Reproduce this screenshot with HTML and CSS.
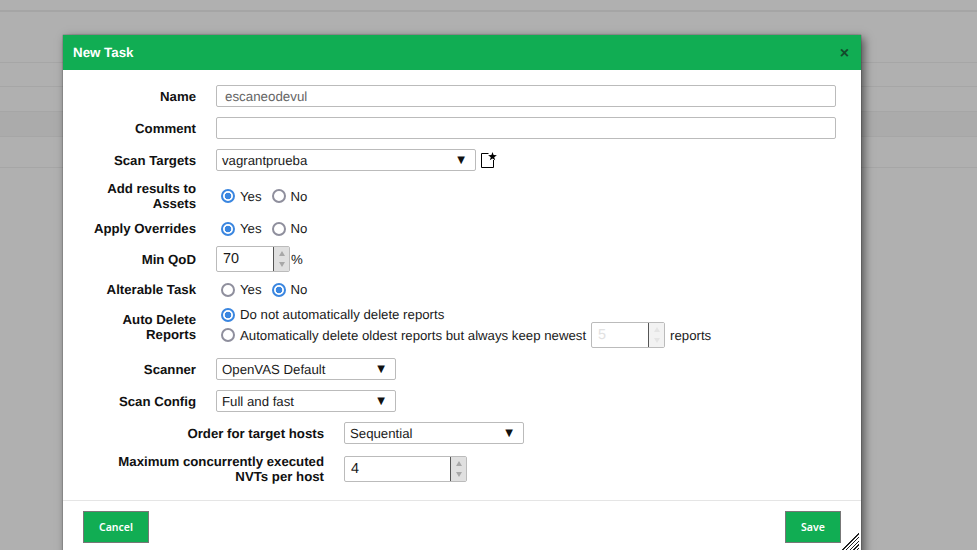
FILE: index.html
```html
<!DOCTYPE html>
<html lang="en">
  <head>
    <title>New Task</title>
    <link rel="stylesheet" href="styles.css">
  </head>
  <body>
    <div class="page">
      <div class="page-head"></div>
      <div class="page-row row-a"></div>
      <div class="page-row row-b"></div>
      <div class="page-row row-c"></div>
      <div class="page-row row-d"></div>
      <div class="page-row row-e"></div>
    </div>

    <div class="dialog">
      <div class="dialog-title">
        <span>New Task</span>
        <span class="close">×</span>
      </div>

      <form class="dialog-body">
        <div class="row">
          <label class="label">Name</label>
          <div class="text-input name-input">escaneodevul</div>
        </div>

        <div class="row">
          <label class="label">Comment</label>
          <div class="text-input"></div>
        </div>

        <div class="row">
          <label class="label">Scan Targets</label>
          <div class="select select-wide"><span>vagrantprueba</span><span class="arrow">▼</span></div>
          <svg class="new-icon" width="18" height="16" viewBox="0 0 18 16">
            <path d="M12.5 8v7.5H.5V1.5h7" fill="none" stroke="#000" stroke-width="1"/>
            <path d="M11.5 0l1.1 3.1 3.3.1-2.7 2 1 3.1-2.7-1.9-2.7 1.9 1-3.1-2.7-2 3.3-.1z" fill="#000"/>
          </svg>
        </div>

        <div class="row">
          <label class="label">Add results to Assets</label>
          <div class="radios">
            <label class="radio"><input type="radio" name="assets" checked>Yes</label>
            <label class="radio"><input type="radio" name="assets">No</label>
          </div>
        </div>

        <div class="row">
          <label class="label">Apply Overrides</label>
          <div class="radios">
            <label class="radio"><input type="radio" name="overrides" checked>Yes</label>
            <label class="radio"><input type="radio" name="overrides">No</label>
          </div>
        </div>

        <div class="row">
          <label class="label">Min QoD</label>
          <div class="spinner">
            <span class="spinner-value">70</span>
            <span class="spinner-btns"><i class="up"></i><i class="down"></i></span>
          </div>
          <span class="unit">%</span>
        </div>

        <div class="row">
          <label class="label">Alterable Task</label>
          <div class="radios">
            <label class="radio"><input type="radio" name="alterable">Yes</label>
            <label class="radio"><input type="radio" name="alterable" checked>No</label>
          </div>
        </div>

        <div class="row row-auto">
          <label class="label">Auto Delete Reports</label>
          <div class="auto-delete">
            <label class="radio"><input type="radio" name="auto" checked>Do not automatically delete reports</label>
            <div class="auto-keep">
              <label class="radio"><input type="radio" name="auto">Automatically delete oldest reports but always keep newest</label>
              <div class="spinner disabled">
                <span class="spinner-value">5</span>
                <span class="spinner-btns"><i class="up"></i><i class="down"></i></span>
              </div>
              <span>reports</span>
            </div>
          </div>
        </div>

        <div class="row">
          <label class="label">Scanner</label>
          <div class="select"><span>OpenVAS Default</span><span class="arrow">▼</span></div>
        </div>

        <div class="row">
          <label class="label">Scan Config</label>
          <div class="select"><span>Full and fast</span><span class="arrow">▼</span></div>
        </div>

        <div class="row">
          <label class="label label-long">Order for target hosts</label>
          <div class="select"><span>Sequential</span><span class="arrow">▼</span></div>
        </div>

        <div class="row">
          <label class="label label-long">Maximum concurrently executed NVTs per host</label>
          <div class="spinner spinner-long">
            <span class="spinner-value">4</span>
            <span class="spinner-btns"><i class="up"></i><i class="down"></i></span>
          </div>
        </div>
      </form>

      <div class="dialog-footer">
        <button type="button" class="btn btn-cancel">Cancel</button>
        <button type="button" class="btn btn-save">Save</button>
      </div>

      <div class="resize-handle"></div>
    </div>
  </body>
</html>
```

FILE: styles.css
```css
html,
body {
  height: 100%;
}

body {
  margin: 0;
  overflow: hidden;
  background-color: #b0b0b0;
  font-family: "Liberation Sans", Arial, sans-serif;
  font-size: 13.22px;
  color: #1a1a1a;
  text-rendering: geometricPrecision;
}

.page-head {
  height: 10px;
  border-bottom: 2px solid #a5a5a5;
}

.page-row {
  border-bottom: 1px solid #a6a6a6;
}

.row-a {
  height: 50px;
}

.row-b {
  height: 23px;
}

.row-c {
  height: 24px;
}

.row-d {
  height: 24px;
  background-color: #ababab;
}

.row-e {
  height: 30px;
}

.dialog {
  position: absolute;
  top: 35px;
  left: 63px;
  width: 798px;
  height: 530px;
  background: white;
  box-shadow: 3px 3px 9px rgba(0, 0, 0, 0.55), 0 0 1px rgba(0, 0, 0, 0.7);
}

.dialog-title {
  display: flex;
  justify-content: space-between;
  align-items: center;
  height: 35px;
  padding: 0 12px 0 10px;
  background-color: #11ad53;
  color: white;
  font-weight: bold;
  font-size: 13.33px;
}

.close {
  color: #134a2b;
  font-size: 16px;
  line-height: 16px;
  margin-top: 2px;
}

.dialog-body {
  display: flex;
  flex-direction: column;
  gap: 10px;
  padding: 15px 25px 16px 20px;
}

.row {
  display: flex;
  align-items: center;
}

.label {
  flex: none;
  width: 113px;
  margin-right: 20px;
  font-weight: bold;
  line-height: 15px;
  text-align: right;
  color: #111;
}

.label-long {
  width: 241px;
}

.text-input {
  flex: 1;
  box-sizing: border-box;
  height: 22px;
  padding: 0 8px;
  border: 1px solid #bbb;
  border-radius: 2px;
  line-height: 22px;
}

.name-input {
  color: #666;
  font-size: 13.33px;
}

.select {
  display: flex;
  justify-content: space-between;
  align-items: center;
  box-sizing: border-box;
  width: 180px;
  height: 22px;
  padding: 0 10px 0 5px;
  border: 1px solid #bbb;
  border-radius: 2px;
}

.select-wide {
  width: 260px;
}

.arrow {
  font-family: "DejaVu Sans", sans-serif;
  font-size: 10px;
  color: #111;
}

.new-icon {
  margin: 0 0 0 5px;
}

.radios {
  display: flex;
  gap: 10px;
  padding-left: 5px;
  line-height: 15px;
}

.radio {
  display: flex;
  align-items: center;
  line-height: 15px;
}

.radio input {
  appearance: none;
  box-sizing: border-box;
  width: 14px;
  height: 14px;
  margin: 0 5px 0 0;
  border: 2px solid #8f8f9d;
  border-radius: 50%;
  background: white;
}

.radio input:checked {
  border-color: #3a86e0;
  background: radial-gradient(circle, #3a86e0 0, #3a86e0 3px, white 3.6px);
}

.spinner {
  display: flex;
  box-sizing: border-box;
  width: 74px;
  height: 26px;
  border: 1px solid #bbb;
  border-radius: 2px;
  font-size: 14.4px;
}

.spinner-long {
  width: 123px;
}

.spinner-value {
  flex: 1;
  padding-left: 6px;
  line-height: 25px;
}

.spinner-btns {
  display: flex;
  flex-direction: column;
  align-items: center;
  justify-content: space-between;
  box-sizing: border-box;
  width: 16px;
  padding: 3px 0;
  border-left: 1px solid #555;
  background-color: #e0e0e0;
}

.spinner-btns i {
  width: 0;
  height: 0;
  margin: 1px 0;
  border-left: 3px solid transparent;
  border-right: 3px solid transparent;
}

.spinner-btns .up {
  border-bottom: 5px solid #a8a8a8;
}

.spinner-btns .down {
  border-top: 5px solid #a8a8a8;
}

.spinner.disabled {
  color: #e2e2e2;
}

.spinner.disabled .spinner-btns {
  background-color: #f2f2f2;
}

.spinner.disabled .up {
  border-bottom-color: #e4e4e4;
}

.spinner.disabled .down {
  border-top-color: #e4e4e4;
}

.unit {
  margin-left: 1px;
}

.row-auto {
  align-items: flex-start;
}

.row-auto .label {
  margin-top: 5px;
}

.auto-delete {
  display: flex;
  flex-direction: column;
  padding-left: 5px;
}

.auto-keep {
  display: flex;
  align-items: center;
  gap: 5px;
}

.dialog-footer {
  display: flex;
  justify-content: space-between;
  padding: 10px 20px;
  border-top: 1px solid #e5e5e5;
}

.btn {
  height: 32px;
  padding: 0;
  border: 1px solid #777;
  background-color: #11ad53;
  color: white;
  font-family: "Noto Sans", sans-serif;
  font-weight: 600;
  font-size: 10.5px;
}

.btn-cancel {
  width: 66px;
}

.btn-save {
  width: 56px;
}

.resize-handle {
  position: absolute;
  top: 496px;
  left: 777px;
  width: 19px;
  height: 19px;
  background: repeating-linear-gradient(135deg, transparent 0, transparent 1.8px, #222 1.8px, #222 2.6px);
  clip-path: polygon(100% 0, 100% 100%, 0 100%);
}
```
